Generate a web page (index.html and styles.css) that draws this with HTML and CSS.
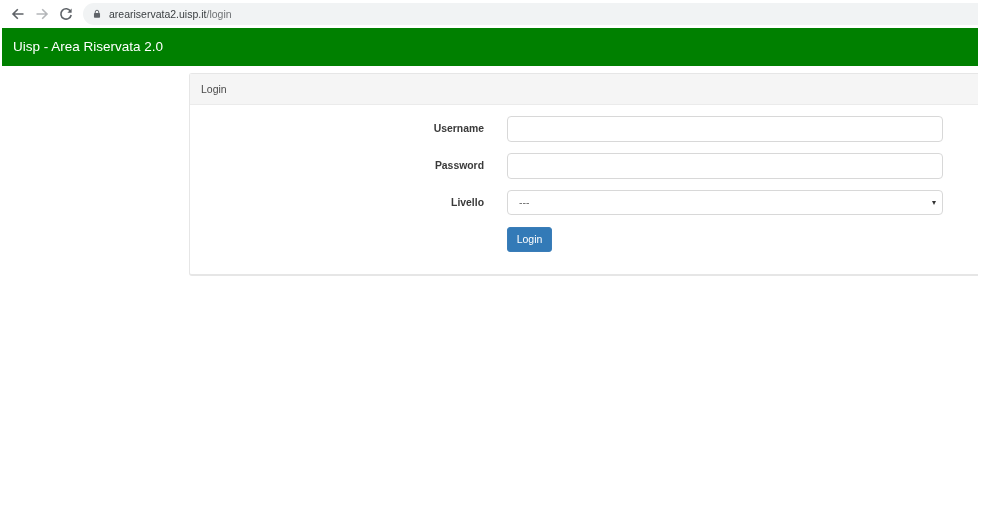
FILE: index.html
```html
<!DOCTYPE html>
<html lang="it">
<head>
<meta charset="utf-8">
<title>Uisp - Area Riservata 2.0</title>
<link rel="stylesheet" href="styles.css">
</head>
<body>
<div class="shot">
  <div class="toolbar">
    <div class="nav">
      <svg class="nav-icon" viewBox="0 0 14 14"><path d="M12.500 7H2M6.800 2.200 2 7l4.800 4.800" fill="none" stroke="#5f6368" stroke-width="1.600"/></svg>
      <svg class="nav-icon" viewBox="0 0 14 14"><path d="M1.500 7H12M7.200 2.200 12 7l-4.800 4.800" fill="none" stroke="#b4b6b9" stroke-width="1.600"/></svg>
      <svg class="nav-icon" viewBox="0 0 14 14"><path d="M11.600 4.300A5.200 5.200 0 1 0 12.200 8" fill="none" stroke="#5f6368" stroke-width="1.600"/><path d="M12.600 1.500v4.200H8.400z" fill="#5f6368"/></svg>
    </div>
    <div class="omnibox">
      <svg class="lock" viewBox="0 0 10 12"><path d="M2.800 5V3.500a2.200 2.200 0 0 1 4.400 0V5" fill="none" stroke="#5f6368" stroke-width="1.200"/><rect x="1.200" y="4.800" width="7.600" height="6" rx="1" fill="#5f6368"/></svg>
      <span class="url">areariservata2.uisp.it<span class="url-path">/login</span></span>
    </div>
  </div>
  <header class="brandbar">Uisp - Area Riservata 2.0</header>
  <section class="panel">
    <div class="panel-heading">Login</div>
    <form class="panel-body">
      <label class="field-label" for="username">Username</label>
      <input class="control" id="username" type="text">
      <label class="field-label" for="password">Password</label>
      <input class="control" id="password" type="password">
      <label class="field-label" for="livello">Livello</label>
      <div class="control select-control" id="livello"><span class="select-value">---</span><span class="caret"></span></div>
      <button class="btn" type="button">Login</button>
    </form>
  </section>
</div>
</body>
</html>
```
FILE: styles.css
```css
html, body {
  margin: 0;
  padding: 0;
  background: #fff;
}

body {
  height: 518px;
  overflow: hidden;
  font-family: "Liberation Sans", Arial, sans-serif;
}

.shot {
  width: 978px;
  padding-top: 3px;
  filter: blur(0.35px);
}

.toolbar {
  display: flex;
  align-items: center;
  height: 22px;
  margin-bottom: 3px;
}

.nav {
  display: flex;
  align-items: center;
  gap: 10px;
  width: 83px;
  padding-left: 11px;
  box-sizing: border-box;
}

.nav-icon {
  width: 14px;
  height: 14px;
  flex: none;
}

.omnibox {
  flex: 1;
  height: 22px;
  display: flex;
  align-items: center;
  gap: 8px;
  padding-left: 10px;
  background: #f1f3f4;
  border-radius: 11px 0 0 11px;
}

.lock {
  width: 8px;
  height: 10px;
  flex: none;
}

.url {
  font-size: 10.500px;
  color: #3c4043;
}

.url-path {
  color: #6f7275;
}

.brandbar {
  margin-left: 2px;
  height: 38px;
  line-height: 38px;
  padding-left: 11px;
  background: #008000;
  color: #fff;
  font-size: 13.500px;
}

.panel {
  margin: 7px 0 0 189px;
  height: 203px;
  box-sizing: border-box;
  border: 1px solid #e6e6e6;
  border-right: 0;
  border-bottom-width: 2px;
  border-radius: 3px 0 0 3px;
}

.panel-heading {
  height: 30px;
  line-height: 30px;
  padding-left: 11px;
  background: #f5f5f5;
  border-bottom: 1px solid #ebebeb;
  font-size: 10.500px;
  color: #4a4a4a;
}

.panel-body {
  display: grid;
  grid-template-columns: 294px 436px;
  grid-auto-rows: 26px;
  column-gap: 23px;
  row-gap: 11px;
  padding-top: 11px;
}

.field-label {
  justify-self: end;
  align-self: center;
  padding-bottom: 2px;
  font-size: 10.400px;
  font-weight: bold;
  color: #3a3a3a;
}

.control {
  box-sizing: border-box;
  width: 436px;
  height: 26px;
  margin: 0;
  padding: 0 11px;
  border: 1px solid #d8d8d8;
  border-radius: 4px;
  background: #fff;
  font-size: 10.500px;
  color: #666;
}

.select-control {
  display: flex;
  align-items: center;
  justify-content: space-between;
  padding-right: 6px;
  height: 25px;
}

.select-value {
  padding-bottom: 2px;
}

.caret {
  width: 0;
  height: 0;
  border-left: 2.500px solid transparent;
  border-right: 2.500px solid transparent;
  border-top: 4px solid #333;
}

.btn {
  grid-column: 2;
  justify-self: start;
  width: 45px;
  height: 25px;
  padding: 0 0 2px;
  border: 1px solid #3a7db8;
  border-radius: 3px;
  background: #337ab7;
  color: #fff;
  font-family: inherit;
  font-size: 10.500px;
}
```
